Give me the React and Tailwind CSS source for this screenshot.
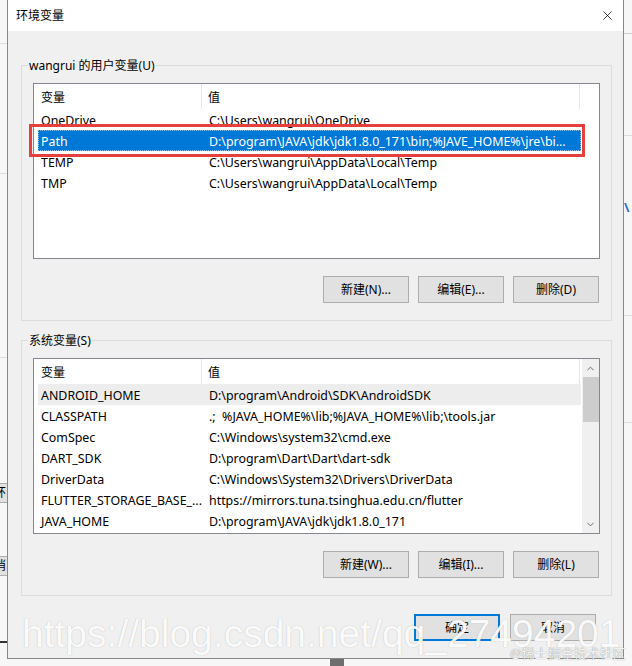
import { X, ChevronUp, ChevronDown } from 'lucide-react';

const USER_VARS = [
  ['OneDrive', 'C:\\Users\\wangrui\\OneDrive'],
  ['Path', 'D:\\program\\JAVA\\jdk\\jdk1.8.0_171\\bin;%JAVE_HOME%\\jre\\bi...'],
  ['TEMP', 'C:\\Users\\wangrui\\AppData\\Local\\Temp'],
  ['TMP', 'C:\\Users\\wangrui\\AppData\\Local\\Temp'],
];

const SYS_VARS = [
  ['ANDROID_HOME', 'D:\\program\\Android\\SDK\\AndroidSDK'],
  ['CLASSPATH', '.;  %JAVA_HOME%\\lib;%JAVA_HOME%\\lib;\\tools.jar'],
  ['ComSpec', 'C:\\Windows\\system32\\cmd.exe'],
  ['DART_SDK', 'D:\\program\\Dart\\Dart\\dart-sdk'],
  ['DriverData', 'C:\\Windows\\System32\\Drivers\\DriverData'],
  ['FLUTTER_STORAGE_BASE_...', 'https://mirrors.tuna.tsinghua.edu.cn/flutter'],
  ['JAVA_HOME', 'D:\\program\\JAVA\\jdk\\jdk1.8.0_171'],
];

const Button = ({ children, focused }) => (
  <div
    className={`h-[27px] w-[86px] flex items-center justify-center bg-[#e1e1e1] text-[12px] text-black ${
      focused ? 'border-2 border-[#0078d7]' : 'border border-[#adadad]'
    }`}
  >
    {children}
  </div>
);

const ListView = ({ rows, selected, soft, scroll }) => (
  <div className="ml-[11px] mt-[9px] w-[567px] h-[176px] border border-[#828790] bg-white flex">
    <div className="flex-1 flex flex-col">
      <div className="flex h-[25px] text-[12px] text-black">
        <div className="w-[168px] pl-[7px] pt-[2px] flex items-center border-r border-[#e5e5e5]">变量</div>
        <div className="w-[378px] pl-[6px] pt-[2px] flex items-center border-r border-[#e5e5e5]">值</div>
      </div>
      {rows.map(([name, value], i) => {
        const sel = i === selected;
        const hov = i === soft;
        return (
          <div
            key={name}
            className={`ml-[4px] w-[543px] h-[21px] pt-[4px] flex items-center text-[12.4px] whitespace-pre ${
              sel ? 'bg-[#0078d7] text-white outline-1 outline-dotted outline-[#8ec3ee] -outline-offset-1' : hov ? 'bg-[#ededed] text-black' : 'text-black'
            }`}
          >
            <div className="w-[165px] pl-[3px] overflow-hidden">{name}</div>
            <div className="flex-1 pl-[6px] overflow-hidden">{value}</div>
          </div>
        );
      })}
    </div>
    {scroll && (
      <div className="w-[17px] bg-[#f0f0f0] flex flex-col items-center">
        <div className="h-[18px] flex items-center justify-center text-[#606060]">
          <ChevronUp size={11} strokeWidth={2} />
        </div>
        <div className="w-[16px] h-[45px] bg-[#cdcdcd]" />
        <div className="flex-1" />
        <div className="h-[18px] flex items-center justify-center text-[#606060]">
          <ChevronDown size={11} strokeWidth={2} />
        </div>
      </div>
    )}
  </div>
);

const GroupBox = ({ label, children, className }) => (
  <fieldset className={`ml-[13px] w-[591px] border border-[#dcdcdc] ${className}`}>
    <legend className="ml-[6px] px-[1px] text-[12px] leading-[17px] text-black">{label}</legend>
    {children}
  </fieldset>
);

export default function App() {
  return (
    <div className="relative w-[632px] h-[666px] overflow-hidden bg-[#f7f7f7] font-['Noto_Sans','Noto_Sans_CJK_SC',sans-serif]">
      {/* bits of the windows behind */}
      <div className="absolute left-0 top-[43px] w-[7px] h-px bg-[#dddddd]" />
      <div className="absolute left-0 top-[173px] w-[7px] h-px bg-[#dddddd]" />
      <div className="absolute left-0 top-[357px] w-[7px] h-px bg-[#dddddd]" />
      <div className="absolute left-0 top-[483px] w-[7px] h-[20px] bg-[#e1e1e1] border-y border-[#adadad] overflow-hidden">
        <span className="block -ml-[6px] text-[12px] leading-[18px]">环</span>
      </div>
      <div className="absolute left-0 top-[556px] w-[7px] h-[20px] bg-[#e1e1e1] border-y border-[#adadad] overflow-hidden">
        <span className="block -ml-[6px] text-[12px] leading-[18px]">消</span>
      </div>
      <div className="absolute left-0 top-[641px] w-[7px] h-[2px] bg-[#333333]" />
      <div className="absolute right-0 top-[33px] w-[8px] h-px bg-[#cccccc]" />
      <div className="absolute right-0 top-[135px] w-[8px] h-px bg-[#dddddd]" />
      <div className="absolute right-0 top-[200px] w-[8px] text-[13px] leading-[14px] text-[#1e6fc8] font-bold">\</div>
      <div className="absolute right-0 top-[315px] w-[8px] h-px bg-[#dddddd]" />
      <div className="absolute right-0 top-[422px] w-[8px] h-px bg-[#dddddd]" />
      <div className="absolute left-[330px] top-[659px] w-[14px] h-[7px] bg-[#6e6e6e]" />

      <div className="ml-[7px] w-[617px] h-[659px] border-x border-b border-[#888888] bg-[#f0f0f0] flex flex-col">
        <div className="h-[31px] bg-white flex items-center justify-between pl-[8px] pr-[8px]">
          <span className="text-[12px] text-black">环境变量</span>
          <X size={15} strokeWidth={1.2} className="text-black" />
        </div>

        <GroupBox label="wangrui 的用户变量(U)" className="mt-[26px]">
          <ListView rows={USER_VARS} selected={1} />
          <div className="mt-[17px] mb-[17px] mr-[12px] flex justify-end gap-[9px]">
            <Button>新建(N)...</Button>
            <Button>编辑(E)...</Button>
            <Button>删除(D)</Button>
          </div>
        </GroupBox>

        <GroupBox label="系统变量(S)" className="mt-[11px]">
          <ListView rows={SYS_VARS} soft={0} scroll />
          <div className="mt-[17px] mb-[17px] mr-[12px] flex justify-end gap-[9px]">
            <Button>新建(W)...</Button>
            <Button>编辑(I)...</Button>
            <Button>删除(L)</Button>
          </div>
        </GroupBox>

        <div className="mt-[18px] mr-[27px] flex justify-end gap-[10px]">
          <Button focused>确定</Button>
          <Button>取消</Button>
        </div>
      </div>

      {/* red annotation round the Path row */}
      <div className="absolute left-[29px] top-[124px] w-[556px] h-[33px] border-[3px] border-[#e5403d]" />

      {/* watermarks */}
      <div className="absolute left-[22px] top-[614px] text-[39px] leading-none text-white/95 font-['Liberation_Sans',sans-serif] whitespace-nowrap [text-shadow:0_0_1px_rgba(120,120,120,0.5)]">
        https://blog.csdn.net/qq_27494201
      </div>
      <div className="absolute left-[510px] top-[645px] text-[13px] leading-[16px] text-[#f2f2f2] whitespace-nowrap [text-shadow:0_0_1px_#777]">
        @稀土掘金技术社区
      </div>
    </div>
  );
}
